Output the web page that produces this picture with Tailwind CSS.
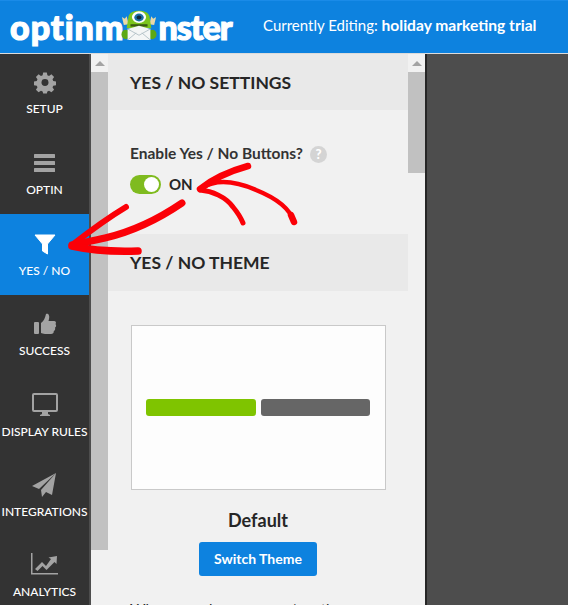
<!DOCTYPE html>
<html>
  <head>
    <meta charset="UTF-8" />
    <title>OptinMonster</title>
    <script src="https://cdn.jsdelivr.net/npm/@tailwindcss/browser@4"></script>
  </head>
  <body class="relative w-[568px] h-[605px] overflow-hidden bg-[#4d4d4d] font-['Lato','Open_Sans',sans-serif]">
    <!-- top bar -->
    <header class="h-[53px] bg-[#0d82df] border-t border-[#1a8be8] flex items-center text-white">
      <div class="relative w-[263px] pl-[10px] flex items-center text-[34px] leading-none font-black [-webkit-text-stroke:1.2px_white]">
        <span class="tracking-[1px]">optinm</span><span class="w-[34px]"></span><span class="tracking-[-1px]">nster</span>
        <svg class="absolute left-[121px] top-[0px]" width="36" height="30" viewBox="0 0 38 38" preserveAspectRatio="none">
          <path d="M3 19 1 9l3 2 2-3 2 10zM35 19l2-10-3 2-2-3-2 10z" fill="#e9d9a8" />
          <path d="M8 8C9 3 14 1 19 1s10 2 11 7l2 15H6z" fill="#7cc51d" />
          <ellipse cx="5" cy="31" rx="4.500" ry="6" fill="#5da814" />
          <ellipse cx="33" cy="31" rx="4.500" ry="6" fill="#5da814" />
          <circle cx="19" cy="9" r="7.500" fill="#fff" />
          <circle cx="19" cy="9.500" r="5" fill="#1c6fa8" />
          <circle cx="19" cy="9.500" r="2.500" fill="#10283a" />
          <path d="M10 18h18v3H10z" fill="#3a5a12" />
          <path d="M7 24 19 20l12 4v14H7z" fill="#f4f6f6" />
          <path d="m7 24 12 8 12-8M7 38l9-9M31 38l-9-9" fill="none" stroke="#aebdc4" stroke-width="1" />
        </svg>
      </div>
      <p class="mb-[3px] text-[15px] leading-none whitespace-nowrap">Currently Editing: <b class="text-[15.600px] font-bold">holiday marketing trial</b></p>
    </header>

    <div class="flex h-[552px] border-t border-white/80">
      <!-- sidebar -->
      <nav class="w-[89px] shrink-0 bg-[#333333] text-white text-[12px] leading-none text-center font-medium">
        <a class="h-[80px] pt-[17px] flex flex-col items-center">
          <svg class="mb-[9px]" width="22" height="23" viewBox="0 0 24 24" fill="#a3a3a3">
            <path fill-rule="evenodd" d="M10 1h4l.6 3 1.800.8L19 3l2.900 2.900-1.700 2.600.8 1.800 3 .6v4l-3 .6-.8 1.800 1.700 2.500L19 22.700l-2.600-1.700-1.800.8-.6 2.200h-4l-.6-2.200-1.800-.8L5 22.700 2.100 19.800l1.700-2.500-.8-1.800-3-.6v-4l3-.6.8-1.800L2.100 5.900 5 3l2.600 1.800L9.400 4z" />
            <circle cx="12" cy="12" r="3.800" fill="#333333" />
          </svg>
          SETUP
        </a>
        <a class="h-[80px] pt-[17px] flex flex-col items-center">
          <svg class="mb-[9px]" width="22" height="24" viewBox="0 0 22 24" fill="#a3a3a3">
            <rect y="3" width="21" height="4" rx=".5" />
            <rect y="10" width="21" height="4" rx=".5" />
            <rect y="17" width="21" height="4" rx=".5" />
          </svg>
          OPTIN
        </a>
        <a class="h-[81px] pt-[18px] flex flex-col items-center bg-[#0d82df]">
          <svg class="mb-[9px]" width="22" height="24" viewBox="0 0 22 24" fill="#ffffff">
            <path d="M1 3h20l-7.500 9v10l-5-3v-7z" stroke="#ffffff" stroke-linejoin="round" />
          </svg>
          YES / NO
        </a>
        <a class="h-[80px] pt-[17px] flex flex-col items-center">
          <svg class="mb-[9px]" width="24" height="24" viewBox="0 0 24 24" fill="#a3a3a3">
            <rect x="1" y="10" width="5" height="12" rx="1" />
            <path d="M8 11c3-2 4-5 5-9 2-1 4 1 3 5l-.5 2H21c2 0 2.500 2 1.500 3 1 1 .8 3-.5 3.500.5 1.500 0 3-1.200 3.500.2 2-1 3-2.800 3H12c-2 0-3-1-4-1z" />
          </svg>
          SUCCESS
        </a>
        <a class="h-[80px] pt-[17px] flex flex-col items-center">
          <svg class="mb-[10px]" width="26" height="24" viewBox="0 0 26 24" fill="#a3a3a3">
            <path fill-rule="evenodd" d="M2 1h22a2 2 0 0 1 2 2v15a2 2 0 0 1-2 2h-8v2l2 1v1H8v-1l2-1v-2H2a2 2 0 0 1-2-2V3a2 2 0 0 1 2-2zm0 2v15h22V3z" />
          </svg>
          DISPLAY RULES
        </a>
        <a class="h-[80px] pt-[18px] flex flex-col items-center">
          <svg class="mb-[9px]" width="25" height="24" viewBox="0 0 25 24" fill="#a3a3a3">
            <path d="M24 0 0 13l7 3zM24 0 9 17l1 7 4-5 6 3z" />
          </svg>
          INTEGRATIONS
        </a>
        <a class="pt-[17px] flex flex-col items-center">
          <svg class="mb-[10px]" width="28" height="24" viewBox="0 0 28 24" fill="#a3a3a3">
            <path d="M0 1h1.500v20H27v1.500H0z" />
            <path d="M4 17 11 10l4 4 5-7-2.500-1.500L26 4l-.5 8-2-2-8 8-4-4-5 5z" />
          </svg>
          ANALYTICS
        </a>
      </nav>

      <!-- left scrollbar -->
      <div class="w-[17px] shrink-0 ml-[2px] bg-[#f1f1f1]">
        <div class="h-[18px] flex items-center justify-center">
          <div class="w-0 h-0 border-x-[5px] border-x-transparent border-b-[5px] border-b-[#a3a3a3]"></div>
        </div>
        <div class="h-[478px] bg-[#c1c1c1]"></div>
      </div>

      <!-- settings panel -->
      <main class="w-[300px] shrink-0 bg-[#f1f1f1] text-[#262626] overflow-hidden">
        <div class="h-[56px] bg-[#e9e9e9] pl-[22px] pt-[1px] flex items-center text-[17.500px] font-bold leading-none">YES / NO SETTINGS</div>
        <div class="h-[124px] pl-[22px] pt-[35px]">
          <div class="flex items-center gap-[7px] h-[18px] text-[15.500px] font-bold text-[#333333] leading-none">
            Enable Yes / No Buttons?
            <span class="w-[17px] h-[17px] rounded-full bg-[#d4d4d4] text-white text-[13px] font-black flex items-center justify-center">?</span>
          </div>
          <div class="mt-[12px] flex items-center gap-[8px]">
            <div class="w-[31px] h-[19px] rounded-full bg-[#7fbb1f] flex items-center justify-end pr-[2px]">
              <div class="w-[15px] h-[15px] rounded-full bg-white"></div>
            </div>
            <span class="text-[15px] font-bold leading-none">ON</span>
          </div>
        </div>
        <div class="h-[57px] bg-[#e9e9e9] pl-[22px] flex items-center text-[17.500px] font-bold leading-none">YES / NO THEME</div>
        <div class="flex flex-col items-center pt-[34px]">
          <div class="w-[255px] h-[165px] bg-[#fdfdfd] border border-[#c9c9c9] flex items-center justify-center gap-[5px]">
            <div class="w-[110px] h-[17px] rounded-[3px] bg-[#7fc400]"></div>
            <div class="w-[109px] h-[17px] rounded-[3px] bg-[#666666]"></div>
          </div>
          <p class="mt-[21px] text-[18px] leading-none font-bold">Default</p>
          <button class="mt-[13px] w-[118px] h-[34px] rounded-[3px] bg-[#0d82df] text-white text-[14px] font-bold leading-none">Switch Theme</button>
          <p class="self-start mt-[26px] ml-[22px] text-[15px] leading-none whitespace-nowrap">When you choose a yes / no theme</p>
        </div>
      </main>

      <!-- right scrollbar -->
      <div class="w-[17px] shrink-0 bg-[#f1f1f1]">
        <div class="h-[18px] flex items-center justify-center">
          <div class="w-0 h-0 border-x-[5px] border-x-transparent border-b-[5px] border-b-[#a3a3a3]"></div>
        </div>
        <div class="h-[101px] bg-[#c1c1c1]"></div>
      </div>
      <div class="w-[2px] shrink-0 bg-[#262626]"></div>
    </div>

    <!-- hand drawn arrows -->
    <svg class="absolute left-0 top-0 pointer-events-none" width="568" height="605" viewBox="0 0 568 605" fill="none" stroke="#fb0007" stroke-linecap="round" stroke-linejoin="round">
      <path d="M248 166C230 171 214 178 200 189" stroke-width="6.500" />
      <path d="M200 190C212 191 226 197 233 207C238 213 241 218 243 223" stroke-width="5" />
      <path d="M202 188C216 179 235 181 256 190C276 198 290 208 294 222" stroke-width="4.500" />
      <path d="M291 215 294 222" stroke-width="6.500" />
      <path d="M126 207C106 219 90 231 72 245" stroke-width="6" />
      <path d="M182 203C160 218 135 231 105 238C92 241 80 243 72 245" stroke-width="7" />
      <path d="M72 246C90 250 112 252 138 251" stroke-width="7.500" />
    </svg>
  </body>
</html>
